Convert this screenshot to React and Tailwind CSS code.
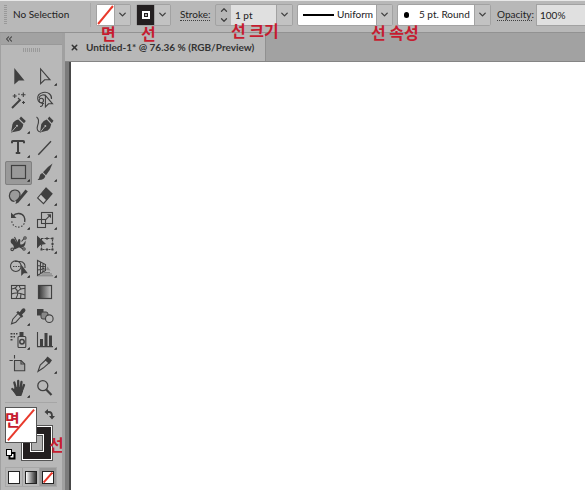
import React from "react";
import { ChevronDown, ChevronUp, ChevronsLeft, X, Type } from "lucide-react";

const D = "#404040";

const line = { fill: "none", stroke: D, strokeWidth: 1.1 };

const tools = [
  { name: "Selection", art: <path d="M9.3 3V19.500L13.800 15.500H19.500Z" fill={D} /> },
  { name: "Direct Selection", more: true, art: <path d="M8.6 4V18.6L12.6 14.8H18Z" {...line} /> },
  {
    name: "Magic Wand",
    art: (
      <g>
        <path d="M7 19L15.500 10.500" stroke={D} strokeWidth="2" />
        <path d="M9.700 5V9M7.700 7H11.700M18.300 3.500V8M16 5.700H20.500M18.500 12V15M17 13.500H20M14 4.500V6M13 9L15 11" {...line} />
      </g>
    ),
  },
  {
    name: "Lasso",
    art: (
      <g {...line}>
        <path d="M12 14.500C4 15 3.500 5 11 3.500C16 2.500 20 5.500 19.500 10" />
        <path d="M7 9C8 5.500 13 5 14 7.500" />
        <circle cx="9.3" cy="11.500" r="2.200" />
        <path d="M10 13.500C11.500 15.500 10.500 17.500 8 17.500" />
        <path d="M13.400 6.500V18L16.500 14.800H20.500Z" />
      </g>
    ),
  },
  {
    name: "Pen",
    more: true,
    art: (
      <g>
        <path d="M6 19.500L7.500 11Q9.500 7.200 13.300 6.500L18.300 11.300Q17.800 15.500 14.500 17.700Z" fill={D} />
        <path d="M14.300 5.700L16 3.500L20.800 8L19 10.200Z" fill={D} />
        <path d="M6.500 19L11.300 13.500" stroke="#b8b8b8" strokeWidth="0.900" />
        <circle cx="12" cy="12.700" r="1" fill="#b8b8b8" />
      </g>
    ),
  },
  {
    name: "Curvature",
    art: (
      <g>
        <path d="M8 19.500L9.300 11Q11.500 7.200 14.700 6.500L19.200 11.300Q18.700 15.500 15.800 17.500Z" fill={D} />
        <path d="M15.700 5.700L17.300 3.500L21.500 7.800L19.800 10.200Z" fill={D} />
        <path d="M8.500 19L12.700 13.700" stroke="#b8b8b8" strokeWidth="0.900" />
        <circle cx="13.300" cy="12.900" r="1" fill="#b8b8b8" />
        <path d="M4.500 4C8 6 6.500 10 5.500 13C4.500 16 5.500 18.500 8.500 19" {...line} />
      </g>
    ),
  },
  { name: "Type", more: true, art: <Type x="4" y="1" width="18" height="18" color={D} strokeWidth={2.7} strokeLinecap="butt" strokeLinejoin="miter" /> },
  { name: "Line Segment", more: true, art: <path d="M6.300 17.700L19 4.300" {...line} strokeWidth="1.400" /> },
  { name: "Rectangle", more: true, active: true, art: <rect x="6.500" y="4.500" width="14" height="13" fill="none" stroke={D} strokeWidth="1.200" /> },
  {
    name: "Paintbrush",
    more: true,
    art: (
      <g fill={D}>
        <path d="M20.500 2.500Q18.500 9 14 14.300L11 11.300Q15 6 20.500 2.500Z" />
        <path d="M10.300 12L13.300 15Q12.500 19.500 5.500 19Q7.300 17.500 7.500 15.500Q8 12.500 10.300 12Z" />
      </g>
    ),
  },
  {
    name: "Shaper",
    more: true,
    art: (
      <g>
        <path d="M9.500 16.500C5 16 3.500 11.500 5 8C7 4 13 4 14.800 8C15.800 11 14 14.500 10.500 16" fill="#9a9a9a" stroke={D} strokeWidth="1.200" />
        <path d="M20.500 4.500L22.800 6.500L13.500 17.500L10.500 19L11.300 15.700Z" fill={D} />
      </g>
    ),
  },
  {
    name: "Eraser",
    more: true,
    art: (
      <g>
        <path d="M14 3L20 8.700L11.500 18.600L5.600 13Z" {...line} fill="#c4c4c4" />
        <path d="M14 2.700L20.400 8.700L14.500 15.600L8.700 9.500Z" fill={D} />
      </g>
    ),
  },
  {
    name: "Rotate",
    more: true,
    art: (
      <g>
        <path d="M8 7C11 3.300 17 4 19 7.500C20 9.500 20.200 11 19.700 13" {...line} strokeWidth="1.400" />
        <path d="M19.300 14.200C17 19.500 9 19.700 7 13.500L6.700 11" {...line} strokeDasharray="1.500 1.600" />
        <path d="M6 3.500V9H11.500Z" fill={D} />
      </g>
    ),
  },
  {
    name: "Scale",
    more: true,
    art: (
      <g>
        <rect x="9.500" y="3.500" width="11" height="11" {...line} />
        <rect x="5.500" y="10.500" width="8" height="8" {...line} />
        <path d="M13.500 10.800L18 6.300" {...line} />
        <path d="M15 5.300H19V9.300Z" fill={D} />
      </g>
    ),
  },
  {
    name: "Width",
    more: true,
    art: (
      <g>
        <path d="M7.500 16.500C10 14 8.500 12 6.500 10.500C5 9 5.500 5.500 8 5.500C10.500 5.500 10 8.500 12 9.500C13.500 8.500 12.500 6 14.500 6C16.500 7 14.500 9.500 15.500 11.500C17.500 12 19.500 10 20.500 7.500C21 12 19 15 15.500 14.500C12.500 14 11.500 16.500 7.500 16.500Z" fill={D} />
        <path d="M9.500 4L12.500 10M15 14L18 16M19 5.500L16.500 8.500" {...line} />
        <circle cx="7.200" cy="16.300" r="1.300" {...line} fill="#b8b8b8" />
        <circle cx="20" cy="5" r="1.200" {...line} fill="#b8b8b8" />
        <circle cx="19" cy="16" r="1.200" {...line} fill="#b8b8b8" />
      </g>
    ),
  },
  {
    name: "Free Transform",
    more: true,
    art: (
      <g>
        <rect x="9.500" y="5.500" width="11" height="11" {...line} strokeDasharray="2 1" />
        <path d="M8.500 15.500h2v2h-2zM14 15.500h2v2h-2zM19.500 15.500h2v2h-2zM19.500 10h2v2h-2zM19.500 4.500h2v2h-2zM14 4.500h2v2h-2z" fill={D} />
        <path d="M5 2.500V15.500L8.300 12L14 11Z" fill={D} />
      </g>
    ),
  },
  {
    name: "Shape Builder",
    more: true,
    art: (
      <g>
        <circle cx="10.800" cy="9.200" r="5.300" {...line} />
        <path d="M10 4.500H15C19 4.500 20.500 8 20 11" {...line} />
        <path d="M8 9.500H16" {...line} strokeDasharray="1.500 1" />
        <path d="M16.200 7.500V19L18.900 16.300H22.800Z" fill={D} />
      </g>
    ),
  },
  {
    name: "Perspective Grid",
    more: true,
    art: (
      <g>
        <path d="M5.500 3.500V18.500L13.500 13.500V7.500ZM8.500 5V16.500M11 6.500V15M5.500 8.500L13.500 9.700M5.500 13L13.500 11.700" {...line} />
        <path d="M14 13L15.500 9.500L18.500 13.500Z" fill="#8b8b8b" />
        <path d="M12 15.500H18M9.500 17H20M6 18.800H21" stroke="#777" strokeWidth="0.900" />
      </g>
    ),
  },
  {
    name: "Mesh",
    art: (
      <g {...line}>
        <rect x="6.500" y="4.500" width="13.500" height="13" />
        <path d="M6.500 8Q12 7 12 4.500M10 7Q15 11 11 17.500M6.500 13Q12 10.500 20 14M12.500 11Q15 7 20 7.500M16 8Q14 6.500 14.500 4.500M16 12.500L15.500 17.500" />
      </g>
    ),
  },
  {
    name: "Gradient",
    art: <rect x="6.500" y="4.500" width="13" height="13" fill="url(#toolFade)" stroke={D} strokeWidth="1.200" />,
  },
  {
    name: "Eyedropper",
    more: true,
    art: (
      <g>
        <path d="M13 8.500L7.800 14.200L6.500 18.800L10.800 17.200L16 11.500" {...line} />
        <path d="M11.300 7.500L13 6L14.700 7.300L17 4Q18.700 2.500 20 3.800Q21.200 5.500 19.700 7L17 9.500L18.200 11.200L16.700 12.700Z" fill={D} />
      </g>
    ),
  },
  {
    name: "Blend",
    art: (
      <g>
        <rect x="5" y="4" width="6.500" height="6.500" fill={D} />
        <rect x="9" y="7" width="7" height="7" rx="2" fill="#888" stroke={D} />
        <circle cx="17.300" cy="13.700" r="3.800" fill="#b8b8b8" stroke={D} strokeWidth="1.100" />
      </g>
    ),
  },
  {
    name: "Symbol Sprayer",
    more: true,
    art: (
      <g>
        <path d="M5.500 4h2v1.500h-2zM8.500 4h1.500v1.500h-1.500zM11 4h1.500v1.500h-1.500zM5.500 7h2v1.500h-2zM8.500 7h1.500v1.500h-1.500zM5.500 10h2v1.500h-2zM14.500 3h4v4h-4z" fill={D} />
        <rect x="13" y="7.500" width="7.800" height="11" rx="1" {...line} />
        <circle cx="17" cy="12.800" r="2.200" {...line} strokeWidth="1.500" />
      </g>
    ),
  },
  {
    name: "Column Graph",
    more: true,
    art: (
      <g>
        <path d="M5.500 3V17.600H21" {...line} />
        <path d="M8 10h3v7H8zM12.500 4h3v13h-3zM17 6.500h3v10.500h-3z" fill={D} />
      </g>
    ),
  },
  {
    name: "Artboard",
    art: (
      <g>
        <path d="M9.500 2V5.500M4.500 7.500H7.800" {...line} />
        <path d="M9.500 7.500H16L19.700 11V17.700H9.500Z" {...line} fill="#a8a8a8" />
        <path d="M16 7.500V11H19.700" {...line} />
      </g>
    ),
  },
  {
    name: "Slice",
    more: true,
    art: (
      <g>
        <path d="M6 18.500L8.200 12L13.800 6.800L17 10L11.500 14.800Z" {...line} />
        <path d="M12.800 7L15.500 3.500L20 7.300L17.500 10.800Z" fill={D} />
      </g>
    ),
  },
  {
    name: "Hand",
    more: true,
    art: (
      <g fill="none" stroke={D} strokeLinecap="round">
        <path d="M10.800 11L9.300 5.500M13.200 10.500V4M15.600 11L16.500 5M17.300 12.500L19 8M10.500 15L7.300 12" strokeWidth="2.300" />
        <path d="M9.700 10H18.200L18 14.500L16.300 19H11.300L8.300 14.500Z" fill={D} stroke="none" />
      </g>
    ),
  },
  {
    name: "Zoom",
    art: (
      <g>
        <circle cx="10.800" cy="8.700" r="5" {...line} strokeWidth="1.300" />
        <path d="M14.200 12.500L19.500 18" stroke={D} strokeWidth="2.200" />
      </g>
    ),
  },
];

function Note({ children, className }) {
  return (
    <span
      className={
        "pointer-events-none absolute z-10 whitespace-nowrap font-['Noto_Sans_CJK_KR',sans-serif] text-[16px] leading-3 font-bold text-[#c61c30] " +
        className
      }
    >
      {children}
    </span>
  );
}

const drop = "flex h-full w-4 items-center justify-center border-l border-[#a2a2a2] bg-[#c2c2c2]";
const box = "relative flex h-[22px] items-center rounded-xs border border-[#a2a2a2]";

function Chevron() {
  return <ChevronDown size={11} strokeWidth={3} color={D} />;
}

function NoneMark() {
  return (
    <svg className="block h-full w-full" viewBox="0 0 16 20" preserveAspectRatio="none" aria-hidden="true">
      <path d="M1 19L15 1" stroke="#e8392b" strokeWidth="2" vectorEffect="non-scaling-stroke" />
    </svg>
  );
}

function ControlBar() {
  return (
    <header className="flex h-[33px] items-center border-t border-b border-t-[#e8e8e8] border-b-[#929292] pb-1 pl-1 whitespace-nowrap">
      <span className="h-5 w-[3px] bg-[repeating-linear-gradient(#999_0_1px,#b8b8b8_1px_2px)]" />
      <span className="ml-1.5 w-[77px]">No Selection</span>
      <span className="h-6 w-px bg-[#a8a8a8]" />

      <div className={box + " ml-[5px] w-[35px]"}>
        <button aria-label="Fill" className="h-5 w-[17px] bg-white"><NoneMark /></button>
        <button aria-label="Fill options" className={drop}><Chevron /></button>
        <Note className="top-[22px] left-1">면</Note>
      </div>
      <div className={box + " ml-[5px] w-[35px]"}>
        <button aria-label="Stroke colour" className="flex h-5 w-[17px] items-center justify-center bg-[#231f20]">
          <span className="flex h-2 w-2 items-center justify-center bg-white">
            <span className="h-1 w-1 border border-[#231f20] bg-[#b0b0b0]" />
          </span>
        </button>
        <button aria-label="Stroke colour options" className={drop}><Chevron /></button>
        <Note className="top-[22px] left-1">선</Note>
      </div>

      <label htmlFor="weight" className="ml-[9px] w-[30px] border-b border-dotted border-[#404040] leading-3">Stroke:</label>
      <div className={box + " ml-[5px] w-[78px]"}>
        <div className="flex w-[15px] flex-col items-center">
          <button aria-label="Increase" className="h-2.5"><ChevronUp size={10} strokeWidth={3} color={D} /></button>
          <button aria-label="Decrease" className="h-2.5"><ChevronDown size={10} strokeWidth={3} color={D} /></button>
        </div>
        <input id="weight" defaultValue="1 pt" className="h-full w-0 flex-1 bg-[#e0e0e0] pl-1 outline-none" />
        <button aria-label="Weight presets" className={drop}><Chevron /></button>
        <Note className="top-[19px] left-[15px]">선 크기</Note>
      </div>

      <div className={box + " ml-1 w-24 bg-white"}>
        <span className="ml-[5px] h-0.5 w-[31px] bg-black" />
        <select aria-label="Width profile" className="h-full w-0 flex-1 appearance-none bg-transparent pl-[3px] outline-none">
          <option>Uniform</option>
        </select>
        <span className={drop}><Chevron /></span>
        <Note className="top-[21px] left-[73px]">선 속성</Note>
      </div>
      <div className={box + " ml-1 w-[94px] bg-white"}>
        <span className="ml-1.5 h-1.5 w-[5px] rounded-full bg-black" />
        <select aria-label="Brush" className="ml-1.5 h-full w-0 flex-1 appearance-none bg-transparent pl-1 outline-none">
          <option>5 pt. Round</option>
        </select>
        <span className={drop}><Chevron /></span>
      </div>

      <label htmlFor="opacity" className="ml-1.5 w-[35px] border-b border-dotted border-[#404040] leading-3">Opacity:</label>
      <input id="opacity" defaultValue="100%" className="ml-1 h-[22px] w-0 min-w-10 flex-1 border border-r-0 border-[#a2a2a2] bg-[#e0e0e0] pl-[3px] outline-none" />
    </header>
  );
}

function ColorWell() {
  return (
    <div className="relative mx-[5px] h-[61px] border-t border-[#a6a6a6]">
      <button aria-label="Stroke" className="absolute top-[22px] left-4 h-9 w-8 border border-[#555] bg-white p-px">
        <span className="block h-full w-full border-[7px] border-[#231f20] bg-white p-px">
          <span className="block h-full w-full border border-[#555] bg-[#b0b0b0]" />
        </span>
      </button>
      <button aria-label="Fill" className="absolute top-1 left-0 h-9 w-8 border border-[#555] bg-white"><NoneMark /></button>
      <button aria-label="Swap fill and stroke" className="absolute top-1.5 left-[39px]">
        <svg width="11" height="11" viewBox="0 0 11 11" aria-hidden="true">
          <path d="M3 3H5Q8 3 8 7" fill="none" stroke={D} strokeWidth="1.800" />
          <path d="M0.500 3L4 0V6ZM5 7H11L8 10.500Z" fill={D} />
        </svg>
      </button>
      <button aria-label="Default fill and stroke" className="absolute top-[46px] left-px">
        <svg width="10" height="11" viewBox="0 0 10 11" aria-hidden="true">
          <rect x="3.500" y="4" width="5" height="5.500" fill="white" stroke="black" strokeWidth="2" />
          <rect x="0.500" y="0.500" width="5" height="6" fill="white" stroke="black" />
        </svg>
      </button>
      <Note className="top-2.5 left-0">면</Note>
      <Note className="top-[35px] left-11">선</Note>
    </div>
  );
}

function ToolPanel() {
  return (
    <aside className="flex w-[65px] flex-col overflow-hidden border-r-3 border-l border-r-[#a0a0a0] border-l-[#a0a0a0] bg-[#b8b8b8]">
      <button aria-label="Collapse panel" className="flex h-3 items-center border-b border-[#999] bg-[#a2a2a2] pl-[3px]">
        <ChevronsLeft size={10} strokeWidth={2.5} color={D} />
      </button>
      <div className="flex h-5 justify-center pt-[3px]">
        <span className="h-1 w-[18px] bg-[repeating-linear-gradient(90deg,#999_0_1px,#b8b8b8_1px_2px)]" />
      </div>
      <div className="ml-1 grid w-[54px] grid-cols-2">
        {tools.map((t) => (
          <button
            key={t.name}
            aria-label={t.name}
            aria-pressed={!!t.active}
            className={"h-6 rounded-xs " + (t.active ? "bg-[#999] outline-1 -outline-offset-1 outline-[#808080]" : "")}
          >
            <svg className="block" width="27" height="24" viewBox="0 0 27 24" aria-hidden="true">
              {t.art}
              {t.more && <path d="M24.800 18V20.800H22Z" fill="#222" />}
            </svg>
          </button>
        ))}
      </div>
      <div className="-ml-px pt-px"><ColorWell /></div>
      <div className="mt-1 ml-1 flex h-5 w-[52px] items-stretch divide-x divide-[#a2a2a2] border border-[#a8a8a8]">
        <button aria-label="Color" className="flex flex-1 items-center justify-center">
          <span className="h-[13px] w-3 border border-[#222] bg-white" />
        </button>
        <button aria-label="Gradient" className="flex flex-1 items-center justify-center">
          <span className="h-[13px] w-3 border border-[#222] bg-linear-to-r from-white to-[#333]" />
        </button>
        <button aria-label="None" className="flex flex-1 items-center justify-center bg-[#999]">
          <span className="h-[13px] w-3 border border-[#222] bg-white"><NoneMark /></span>
        </button>
      </div>
    </aside>
  );
}

export default function App() {
  return (
    <div className="flex min-h-screen flex-col bg-[#b8b8b8] font-['Lato',sans-serif] text-[10px] text-[#222]">
      <svg className="absolute h-0 w-0" aria-hidden="true">
        <defs>
          <linearGradient id="toolFade">
            <stop offset="0" stopColor="#333" />
            <stop offset="1" stopColor="#c8c8c8" />
          </linearGradient>
        </defs>
      </svg>
      <ControlBar />
      <div className="flex flex-1">
        <ToolPanel />
        <main className="flex min-w-0 flex-1 flex-col">
          <div className="flex h-[29px] border-b border-[#858585] bg-[#a2a2a2]">
            <div className="flex w-[201px] items-center border-r border-[#909090] bg-[#b8b8b8] pl-[5px] leading-3 font-bold whitespace-nowrap text-[#333]">
              <button aria-label="Close document"><X size={9} strokeWidth={4} color="#333" /></button>
              <span className="ml-[7px]">Untitled-1* @ 76.36 % (RGB/Preview)</span>
            </div>
          </div>
          <div className="flex-1 border-l-4 border-[#7b7b7b]">
            <div className="h-full border-l-2 border-[#484848] bg-white" />
          </div>
        </main>
      </div>
    </div>
  );
}
